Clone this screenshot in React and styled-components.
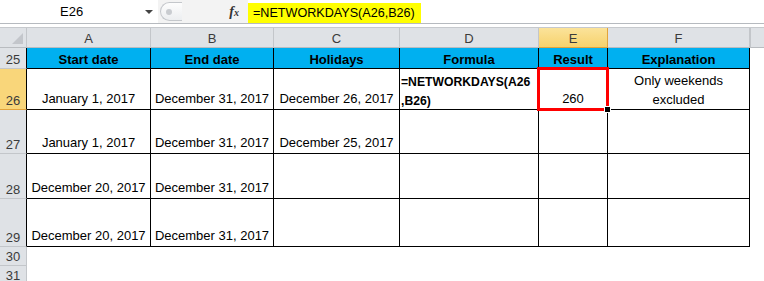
import styled, { createGlobalStyle } from "styled-components";

const GlobalStyle = createGlobalStyle`
  body {
    margin: 0;
    background: #fff;
    font-family: "Liberation Sans", Arial, sans-serif;
  }
`;

const COLS = "27px 124px 123px 126px 139px 69px 142px 14px";
const ROWS = "20px 21px 41px 44px 45px 48px 19px 19px";

const Page = styled.div`
  width: 764px;
  height: 281px;
  overflow: hidden;
  background: #fff;
`;

const FormulaBar = styled.div`
  display: flex;
  height: 23px;
  border-bottom: 1px solid #b6babf;
  font-size: 13px;
  color: #000;
`;

const NameBox = styled.div`
  width: 158px;
  display: flex;
  align-items: center;
  justify-content: space-between;
  padding: 0 5px 0 60px;
  box-sizing: border-box;
  background: #fff;
`;

const Arrow = styled.span`
  width: 0;
  height: 0;
  border-left: 4px solid transparent;
  border-right: 4px solid transparent;
  border-top: 4px solid #444;
  margin-top: 1px;
`;

const FxBox = styled.div`
  width: 90px;
  display: flex;
  align-items: center;
  justify-content: space-between;
  padding: 0 9px 0 2px;
  box-sizing: border-box;
  background: #f3f3f3;
`;

const Pill = styled.div`
  width: 22px;
  height: 19px;
  border: 1px solid #c4c7cb;
  border-right: none;
  border-radius: 10px 0 0 10px;
  background: linear-gradient(#fdfdfd, #eceef0);
  display: flex;
  align-items: center;
  padding-left: 5px;
  box-sizing: border-box;

  &::before {
    content: "";
    width: 6px;
    height: 6px;
    border-radius: 50%;
    background: #c9ccd0;
  }
`;

const Fx = styled.span`
  font-family: "Liberation Serif", "Times New Roman", serif;
  font-style: italic;
  font-weight: bold;
  font-size: 14px;
  color: #333;

  small {
    font-size: 10px;
  }
`;

const FormulaInput = styled.div`
  flex: 1;
  display: flex;
  align-items: flex-end;
  background: #fff;
`;

const Highlight = styled.span`
  background: #ffff00;
  height: 20px;
  line-height: 20px;
  padding: 0 6px 0 5px;
  font-size: 12.6px;
`;

const Spacer = styled.div`
  height: 3px;
  border-bottom: 1px solid #c6c9cd;
`;

const Sheet = styled.div`
  display: grid;
  grid-template-columns: ${COLS};
  grid-template-rows: ${ROWS};
  font-size: 13px;
`;

const Corner = styled.div`
  background: #dfe2e6;
  border-right: 1px solid #c3c6ca;
  border-bottom: 1px solid #b9bcc0;
  position: relative;

  &::after {
    content: "";
    position: absolute;
    right: 3px;
    bottom: 3px;
    border-left: 11px solid transparent;
    border-bottom: 11px solid #c3c6cb;
  }
`;

const ColHead = styled.div`
  display: flex;
  align-items: center;
  justify-content: center;
  color: #3b3b3b;
  background: ${(p) =>
    p.$active ? "linear-gradient(#fbe39a, #f7d26d)" : "#dfe2e6"};
  border-right: 1px solid ${(p) => (p.$active ? "#e3a33b" : "#c3c6ca")};
  border-bottom: 1px solid ${(p) => (p.$active ? "#e3a33b" : "#b9bcc0")};
  padding-top: 1px;
`;

const RowHead = styled.div`
  display: flex;
  align-items: flex-end;
  justify-content: center;
  padding-bottom: 1px;
  color: #3b3b3b;
  background: ${(p) => (p.$active ? "#f9d67a" : "#dfe2e6")};
  border-right: 1px solid ${(p) => (p.$table ? "#000" : "#c3c6ca")};
  border-bottom: 1px solid ${(p) => (p.$active ? "#e3a33b" : "#c3c6ca")};
  box-sizing: border-box;
`;

const Title = styled.div`
  display: flex;
  align-items: flex-end;
  justify-content: center;
  padding-bottom: 1px;
  font-weight: bold;
  background: #00b0f0;
  border-right: 1px solid #000;
  border-bottom: 1px solid #000;
`;

const Cell = styled.div`
  display: flex;
  flex-direction: column;
  justify-content: ${(p) => (p.$top ? "flex-start" : "flex-end")};
  align-items: ${(p) => (p.$left ? "flex-start" : "center")};
  text-align: ${(p) => (p.$left ? "left" : "center")};
  padding: ${(p) =>
    p.$top ? "4px 0 0 1px" : p.$multi ? "0 0 0 0" : "0 0 2px 0"};
  font-weight: ${(p) => (p.$bold ? "bold" : "normal")};
  font-size: ${(p) => (p.$bold ? "12.2px" : "13px")};
  line-height: ${(p) => (p.$multi ? "19px" : "17px")};
  border-right: 1px solid #000;
  border-bottom: 1px solid #000;
  white-space: nowrap;
  overflow: visible;
  position: relative;
  z-index: ${(p) => (p.$selected ? 2 : "auto")};

  ${(p) =>
    p.$selected &&
    `
    &::after {
      content: "";
      position: absolute;
      inset: -2px;
      border: 3px solid #ff0000;
    }
    &::before {
      content: "";
      position: absolute;
      right: -4px;
      bottom: -4px;
      width: 5px;
      height: 5px;
      background: #000;
      border: 1px solid #fff;
      z-index: 3;
    }
  `}
`;

const Empty = styled.div`
  background: ${(p) => (p.$head ? "#dfe2e6" : "#fff")};
  border-bottom: ${(p) => (p.$head ? "1px solid #b9bcc0" : "none")};
  border-left: ${(p) => (p.$head ? "1px solid #c3c6ca" : "none")};
`;

const headers = ["A", "B", "C", "D", "E", "F"];
const titles = ["Start date", "End date", "Holidays", "Formula", "Result", "Explanation"];

const rows = [
  {
    n: 26,
    cells: [
      { t: "January 1, 2017" },
      { t: "December 31, 2017" },
      { t: "December 26, 2017" },
      { t: ["=NETWORKDAYS(A26", ",B26)"], bold: true, left: true, top: true, multi: true },
      { t: "260", selected: true },
      { t: ["Only weekends", "excluded"], multi: true },
    ],
  },
  {
    n: 27,
    cells: [
      { t: "January 1, 2017" },
      { t: "December 31, 2017" },
      { t: "December 25, 2017" },
      {},
      {},
      {},
    ],
  },
  {
    n: 28,
    cells: [{ t: "December 20, 2017" }, { t: "December 31, 2017" }, {}, {}, {}, {}],
  },
  {
    n: 29,
    cells: [{ t: "December 20, 2017" }, { t: "December 31, 2017" }, {}, {}, {}, {}],
  },
];

function Text({ t }) {
  if (!t) return null;
  if (Array.isArray(t)) return t.map((line) => <span key={line}>{line}</span>);
  return <span>{t}</span>;
}

export default function App() {
  return (
    <Page>
      <GlobalStyle />
      <FormulaBar>
        <NameBox>
          <span>E26</span>
          <Arrow />
        </NameBox>
        <FxBox>
          <Pill />
          <Fx>
            f<small>x</small>
          </Fx>
        </FxBox>
        <FormulaInput>
          <Highlight>=NETWORKDAYS(A26,B26)</Highlight>
        </FormulaInput>
      </FormulaBar>
      <Spacer />
      <Sheet>
        <Corner />
        {headers.map((h) => (
          <ColHead key={h} $active={h === "E"}>
            {h}
          </ColHead>
        ))}
        <Empty $head />

        <RowHead $table>25</RowHead>
        {titles.map((t) => (
          <Title key={t}>{t}</Title>
        ))}
        <Empty />

        {rows.map((r) => [
          <RowHead key={`h${r.n}`} $table $active={r.n === 26}>
            {r.n}
          </RowHead>,
          ...r.cells.map((c, i) => (
            <Cell
              key={`${r.n}-${i}`}
              $bold={c.bold}
              $left={c.left}
              $top={c.top}
              $multi={c.multi}
              $selected={c.selected}
            >
              <Text t={c.t} />
            </Cell>
          )),
          <Empty key={`e${r.n}`} />,
        ])}

        {[30, 31].map((n) => [
          <RowHead key={`h${n}`}>{n}</RowHead>,
          ...headers.map((h) => <Empty key={`${n}${h}`} />),
          <Empty key={`e${n}`} />,
        ])}
      </Sheet>
    </Page>
  );
}
